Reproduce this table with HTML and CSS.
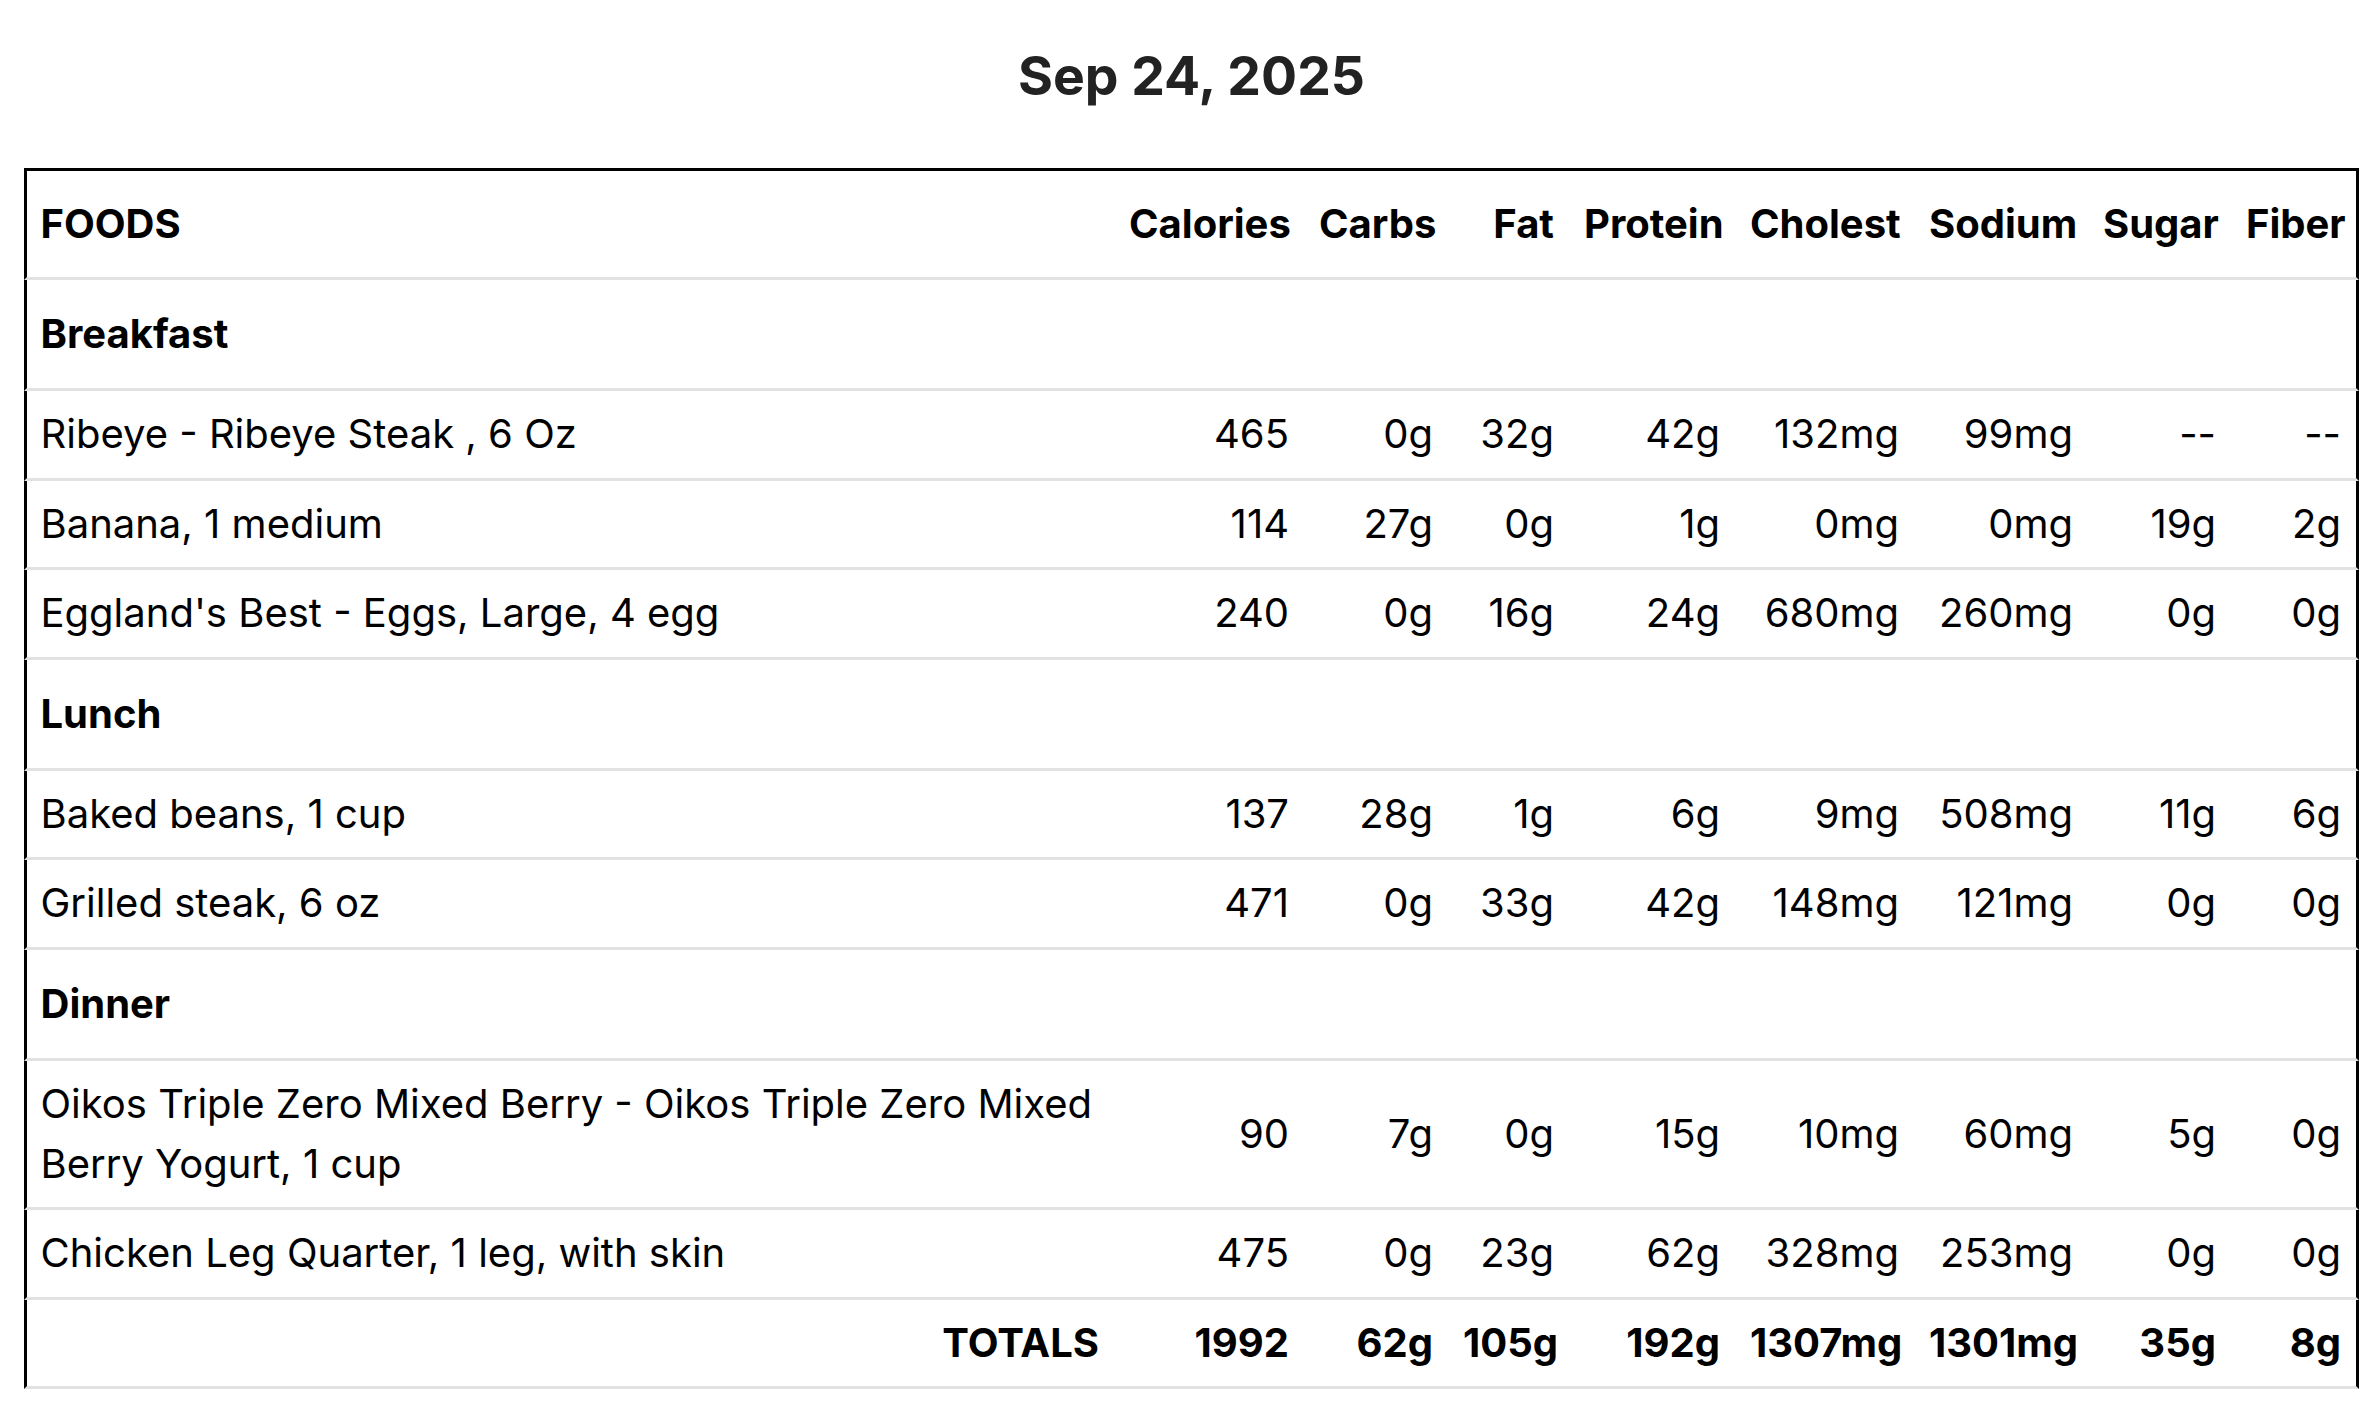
FILE: index.html
```html
<!DOCTYPE html>
<html lang="en">
<head>
<meta charset="utf-8">
<title>Food Diary - Sep 24, 2025</title>
<link rel="stylesheet" href="styles.css">
</head>
<body>
<main class="page">
  <h1 class="title">Sep 24, 2025</h1>
  <table class="diary">
    <colgroup>
      <col class="c-food">
      <col class="c-cal">
      <col class="c-carbs">
      <col class="c-fat">
      <col class="c-protein">
      <col class="c-chol">
      <col class="c-sodium">
      <col class="c-sugar">
      <col class="c-fiber">
    </colgroup>
    <thead>
      <tr class="head">
        <th class="food">FOODS</th>
        <th>Calories</th>
        <th>Carbs</th>
        <th>Fat</th>
        <th>Protein</th>
        <th>Cholest</th>
        <th>Sodium</th>
        <th>Sugar</th>
        <th>Fiber</th>
      </tr>
    </thead>
    <tbody>
      <tr class="meal"><td class="food">Breakfast</td><td></td><td></td><td></td><td></td><td></td><td></td><td></td><td></td></tr>
      <tr class="item"><td class="food">Ribeye - Ribeye Steak , 6 Oz</td><td>465</td><td>0g</td><td>32g</td><td>42g</td><td>132mg</td><td>99mg</td><td>--</td><td>--</td></tr>
      <tr class="item"><td class="food">Banana, 1 medium</td><td>114</td><td>27g</td><td>0g</td><td>1g</td><td>0mg</td><td>0mg</td><td>19g</td><td>2g</td></tr>
      <tr class="item"><td class="food">Eggland's Best - Eggs, Large, 4 egg</td><td>240</td><td>0g</td><td>16g</td><td>24g</td><td>680mg</td><td>260mg</td><td>0g</td><td>0g</td></tr>
      <tr class="meal"><td class="food">Lunch</td><td></td><td></td><td></td><td></td><td></td><td></td><td></td><td></td></tr>
      <tr class="item"><td class="food">Baked beans, 1 cup</td><td>137</td><td>28g</td><td>1g</td><td>6g</td><td>9mg</td><td>508mg</td><td>11g</td><td>6g</td></tr>
      <tr class="item"><td class="food">Grilled steak, 6 oz</td><td>471</td><td>0g</td><td>33g</td><td>42g</td><td>148mg</td><td>121mg</td><td>0g</td><td>0g</td></tr>
      <tr class="meal"><td class="food">Dinner</td><td></td><td></td><td></td><td></td><td></td><td></td><td></td><td></td></tr>
      <tr class="item"><td class="food">Oikos Triple Zero Mixed Berry - Oikos Triple Zero Mixed Berry Yogurt, 1 cup</td><td>90</td><td>7g</td><td>0g</td><td>15g</td><td>10mg</td><td>60mg</td><td>5g</td><td>0g</td></tr>
      <tr class="item"><td class="food">Chicken Leg Quarter, 1 leg, with skin</td><td>475</td><td>0g</td><td>23g</td><td>62g</td><td>328mg</td><td>253mg</td><td>0g</td><td>0g</td></tr>
    </tbody>
    <tfoot>
      <tr class="totals"><td class="label">TOTALS</td><td>1992</td><td>62g</td><td>105g</td><td>192g</td><td>1307mg</td><td>1301mg</td><td>35g</td><td>8g</td></tr>
    </tfoot>
  </table>
</main>
</body>
</html>
```

FILE: styles.css
```css
* { box-sizing: border-box; }

html, body {
  margin: 0;
  padding: 0;
  background: #ffffff;
}

body {
  font-family: Inter, "Noto Sans", "Liberation Sans", sans-serif;
  color: #000;
}

.page {
  padding: 0 21px 0 24px;
}

.title {
  margin: 43px 0 59px;
  font-size: 53.5px;
  line-height: 66px;
  font-weight: 700;
  color: #222;
  text-align: center;
}

.diary {
  width: 2335px;
  table-layout: fixed;
  border-collapse: separate;
  border-spacing: 0;
  font-size: 40px;
  line-height: 60px;
}

.c-food { width: 1090px; }
.c-cal { width: 190px; }
.c-carbs { width: 144px; }
.c-fat { width: 121px; }
.c-protein { width: 166px; }
.c-chol { width: 179px; }
.c-sodium { width: 174px; }
.c-sugar { width: 143px; }
.c-fiber { width: 128px; }

.diary th,
.diary td {
  padding: 13px 15px 13.5px;
  text-align: right;
  vertical-align: middle;
  border-bottom: 3px solid #e2e2e2;
  white-space: nowrap;
}

.diary th:first-child,
.diary td:first-child {
  border-left: 3px solid #000;
  padding-left: 13.5px;
}

.diary th:last-child,
.diary td:last-child {
  border-right: 3px solid #000;
}

.diary .food {
  text-align: left;
  white-space: normal;
}

.head th {
  font-weight: 700;
  border-top: 3px solid #000;
  padding-top: 23px;
  padding-bottom: 23px;
}

.meal td {
  font-weight: 700;
  padding-top: 24px;
  padding-bottom: 24px;
}

.item td {
  font-weight: 400;
}

.totals td {
  font-weight: 700;
  padding-top: 13px;
  padding-bottom: 13px;
}

.totals .label {
  text-align: right;
}
```
